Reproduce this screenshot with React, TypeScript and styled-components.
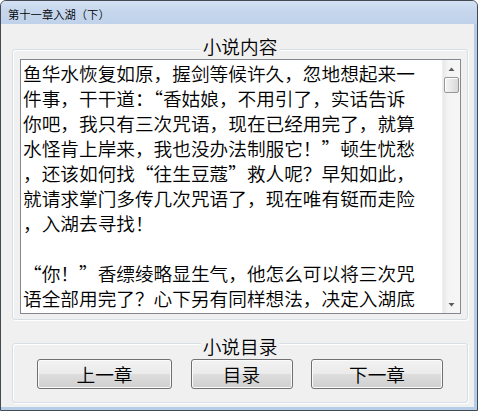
import React from "react";
import styled, { createGlobalStyle } from "styled-components";

const Global = createGlobalStyle`
  html, body { margin: 0; padding: 0; background: #ffffff; }
  body { font-family: "Noto Sans CJK SC", "Noto Sans", sans-serif; }
`;

const CJK = `"Noto Sans CJK SC", "Noto Sans", sans-serif`;

const Window = styled.div`
  width: 478px;
  height: 411px;
  box-sizing: border-box;
  border: 1px solid #444a52;
  border-radius: 6px 6px 0 0;
  background: #b9cfe9;
  display: flex;
  flex-direction: column;
  overflow: hidden;
`;

const TitleBar = styled.div`
  height: 23px;
  flex: none;
  display: flex;
  align-items: center;
  padding: 2px 0 0 7px;
  box-sizing: border-box;
  background: linear-gradient(#d3e1f2 0%, #c6d7ed 45%, #bfd2ea 100%);
  font-family: ${CJK};
  font-size: 11.3px;
  font-weight: 350;
  color: #000;
`;

const Frame = styled.div`
  flex: 1;
  display: flex;
  padding: 0 3px 3px 0;
  background: #b6cde8;
`;

const Client = styled.div`
  flex: 1;
  background: #f0f0f0;
  display: flex;
  flex-direction: column;
  padding: 25px 6px 4px 11px;
  gap: 23px;
`;

const GroupBox = styled.div<{ $h: number; $pad: string }>`
  position: relative;
  height: ${(p) => p.$h}px;
  box-sizing: border-box;
  border: 1px solid #d5dfe5;
  border-radius: 3px;
  box-shadow: inset 1px 1px 0 #ffffff, 1px 1px 0 #ffffff;
  padding: ${(p) => p.$pad};
  display: flex;
`;

const GroupLabel = styled.span<{ $top: number }>`
  position: absolute;
  top: ${(p) => p.$top}px;
  left: 50%;
  transform: translateX(-50%);
  padding: 0 2px;
  background: #f0f0f0;
  font-family: ${CJK};
  font-size: 18.67px;
  font-weight: 350;
  line-height: 25px;
  color: #000;
  white-space: nowrap;
`;

const TextBox = styled.div`
  flex: 1;
  display: flex;
  border: 1px solid #828790;
  background: #ffffff;
  overflow: hidden;
`;

const TextBody = styled.div`
  flex: 1;
  padding: 0 0 0 2px;
  overflow: hidden;
`;

const Line = styled.div`
  font-family: ${CJK};
  font-size: 18.67px;
  font-weight: 350;
  line-height: 25px;
  color: #000;
  white-space: pre;
`;

const ScrollBar = styled.div`
  width: 17px;
  flex: none;
  display: flex;
  flex-direction: column;
  background: linear-gradient(90deg, #e8e8e8 0%, #f4f4f4 30%, #f6f6f6 100%);
  border-left: 1px solid #eeeeee;
`;

const ArrowButton = styled.div`
  height: 17px;
  flex: none;
  display: flex;
  align-items: center;
  justify-content: center;
`;

const Track = styled.div`
  flex: 1;
  padding: 0 1px;
`;

const Thumb = styled.div`
  height: 16px;
  box-sizing: border-box;
  border: 1px solid #979797;
  border-radius: 2px;
  background: linear-gradient(90deg, #f3f3f3 0%, #e8e8e8 50%, #d8d8d8 100%);
  box-shadow: inset 1px 1px 0 #ffffff;
`;

const ButtonRow = styled.div`
  flex: 1;
  display: flex;
  justify-content: space-between;
  align-items: flex-start;
`;

const Button = styled.button<{ $w: number }>`
  width: ${(p) => p.$w}px;
  height: 30px;
  box-sizing: border-box;
  margin: 0;
  padding: 0;
  border: 1px solid #707070;
  border-radius: 3px;
  background: linear-gradient(#f2f2f2 0%, #ebebeb 48%, #dddddd 52%, #cfcfcf 100%);
  box-shadow: inset 0 0 0 1px #fbfbfb;
  font-family: ${CJK};
  font-size: 18.67px;
  font-weight: 350;
  line-height: 1;
  color: #000;
  display: flex;
  align-items: center;
  justify-content: center;
  cursor: default;
`;

const lines = [
  "鱼华水恢复如原，握剑等候许久，忽地想起来一",
  "件事，干干道：“香姑娘，不用引了，实话告诉",
  "你吧，我只有三次咒语，现在已经用完了，就算",
  "水怪肯上岸来，我也没办法制服它！”顿生忧愁",
  "，还该如何找“往生豆蔻”救人呢？早知如此，",
  "就请求掌门多传几次咒语了，现在唯有铤而走险",
  "，入湖去寻找！",
  "\u00a0",
  "“你！”香缥绫略显生气，他怎么可以将三次咒",
  "语全部用完了？心下另有同样想法，决定入湖底",
];

const Arrow = ({ up }: { up?: boolean }) => (
  <svg width="7" height="4" viewBox="0 0 7 4">
    <path d={up ? "M0.5 4 L3.5 0.5 L6.5 4 Z" : "M0.5 0 L3.5 3.5 L6.5 0 Z"} fill="#5a5a5a" />
  </svg>
);

export default function App() {
  return (
    <>
      <Global />
      <Window>
        <TitleBar>第十一章入湖（下）</TitleBar>
        <Frame>
          <Client>
            <GroupBox $h={271} $pad="9px 6px 5px 7px">
              <GroupLabel $top={-17}>小说内容</GroupLabel>
              <TextBox>
                <TextBody>
                  {lines.map((l, i) => (
                    <Line key={i}>{l}</Line>
                  ))}
                </TextBody>
                <ScrollBar>
                  <ArrowButton>
                    <Arrow up />
                  </ArrowButton>
                  <Track>
                    <Thumb />
                  </Track>
                  <ArrowButton>
                    <Arrow />
                  </ArrowButton>
                </ScrollBar>
              </TextBox>
            </GroupBox>
            <GroupBox $h={60} $pad="15px 24px 13px 24px">
              <GroupLabel $top={-11}>小说目录</GroupLabel>
              <ButtonRow>
                <Button $w={135}>上一章</Button>
                <Button $w={102}>目录</Button>
                <Button $w={132}>下一章</Button>
              </ButtonRow>
            </GroupBox>
          </Client>
        </Frame>
      </Window>
    </>
  );
}
